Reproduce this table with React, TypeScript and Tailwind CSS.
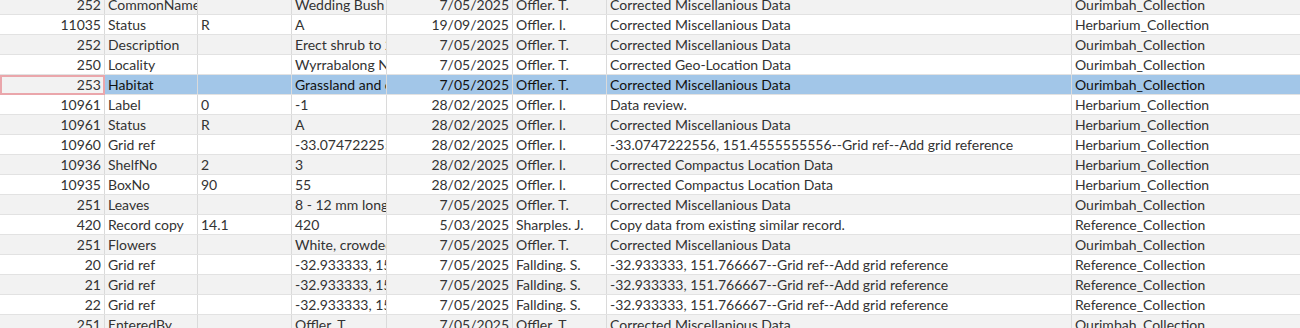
const rows = [
  { id: "252", field: "CommonName", oldVal: "", newVal: "Wedding Bush", date: "7/05/2025", user: "Offler. T.", comment: "Corrected Miscellanious Data", coll: "Ourimbah_Collection" },
  { id: "11035", field: "Status", oldVal: "R", newVal: "A", date: "19/09/2025", user: "Offler. I.", comment: "Corrected Miscellanious Data", coll: "Herbarium_Collection" },
  { id: "252", field: "Description", oldVal: "", newVal: "Erect shrub to 2 m high", date: "7/05/2025", user: "Offler. T.", comment: "Corrected Miscellanious Data", coll: "Ourimbah_Collection" },
  { id: "250", field: "Locality", oldVal: "", newVal: "Wyrrabalong National Park", date: "7/05/2025", user: "Offler. T.", comment: "Corrected Geo-Location Data", coll: "Ourimbah_Collection" },
  { id: "253", field: "Habitat", oldVal: "", newVal: "Grassland and open forest", date: "7/05/2025", user: "Offler. T.", comment: "Corrected Miscellanious Data", coll: "Ourimbah_Collection", selected: true },
  { id: "10961", field: "Label", oldVal: "0", newVal: "-1", date: "28/02/2025", user: "Offler. I.", comment: "Data review.", coll: "Herbarium_Collection" },
  { id: "10961", field: "Status", oldVal: "R", newVal: "A", date: "28/02/2025", user: "Offler. I.", comment: "Corrected Miscellanious Data", coll: "Herbarium_Collection" },
  { id: "10960", field: "Grid ref", oldVal: "", newVal: "-33.0747222556, 151.4555555556", date: "28/02/2025", user: "Offler. I.", comment: "-33.0747222556, 151.4555555556--Grid ref--Add grid reference", coll: "Herbarium_Collection" },
  { id: "10936", field: "ShelfNo", oldVal: "2", newVal: "3", date: "28/02/2025", user: "Offler. I.", comment: "Corrected Compactus Location Data", coll: "Herbarium_Collection" },
  { id: "10935", field: "BoxNo", oldVal: "90", newVal: "55", date: "28/02/2025", user: "Offler. I.", comment: "Corrected Compactus Location Data", coll: "Herbarium_Collection" },
  { id: "251", field: "Leaves", oldVal: "", newVal: "8 - 12 mm long, narrow", date: "7/05/2025", user: "Offler. T.", comment: "Corrected Miscellanious Data", coll: "Ourimbah_Collection" },
  { id: "420", field: "Record copy", oldVal: "14.1", newVal: "420", date: "5/03/2025", user: "Sharples. J.", comment: "Copy data from existing similar record.", coll: "Reference_Collection" },
  { id: "251", field: "Flowers", oldVal: "", newVal: "White, crowded at ends", date: "7/05/2025", user: "Offler. T.", comment: "Corrected Miscellanious Data", coll: "Ourimbah_Collection" },
  { id: "20", field: "Grid ref", oldVal: "", newVal: "-32.933333, 151.766667", date: "7/05/2025", user: "Fallding. S.", comment: "-32.933333, 151.766667--Grid ref--Add grid reference", coll: "Reference_Collection" },
  { id: "21", field: "Grid ref", oldVal: "", newVal: "-32.933333, 151.766667", date: "7/05/2025", user: "Fallding. S.", comment: "-32.933333, 151.766667--Grid ref--Add grid reference", coll: "Reference_Collection" },
  { id: "22", field: "Grid ref", oldVal: "", newVal: "-32.933333, 151.766667", date: "7/05/2025", user: "Fallding. S.", comment: "-32.933333, 151.766667--Grid ref--Add grid reference", coll: "Reference_Collection" },
  { id: "251", field: "EnteredBy", oldVal: "", newVal: "Offler. T.", date: "7/05/2025", user: "Offler. T.", comment: "Corrected Miscellanious Data", coll: "Ourimbah_Collection" },
]

const cell = "h-full overflow-hidden whitespace-nowrap border-r border-[#dadada] px-[3px] leading-[19px]"

export default function App() {
  return (
    <div
      className="h-[328px] w-[1300px] overflow-hidden bg-white text-[14px] text-[#333333]"
      style={{ fontFamily: "Lato, 'Open Sans', sans-serif" }}
    >
      <div className="-mt-[5px]">
        {rows.map((r, i) => {
          const bg = r.selected ? "bg-[#a2c6e8] text-[#111]" : i % 2 === 0 ? "bg-[#f2f2f2]" : "bg-white"
          return (
            <div key={i} className={`flex h-[20px] border-b border-[#e2e2e2] ${bg}`}>
              {r.selected ? (
                <div className="h-[20px] w-[105px] -mb-px shrink-0 overflow-hidden border-2 border-[#eaa6ab] bg-[#f2f2f2] pr-[2px] text-right leading-[16px] text-[#333]">
                  {r.id}
                </div>
              ) : (
                <div className={`${cell} w-[105px] shrink-0 text-right`}>{r.id}</div>
              )}
              <div className={`${cell} w-[93px] shrink-0`}>{r.field}</div>
              <div className={`${cell} w-[94px] shrink-0`}>{r.oldVal}</div>
              <div className={`${cell} w-[95px] shrink-0 text-clip`}>{r.newVal}</div>
              <div className={`${cell} w-[126px] shrink-0 text-right`}>{r.date}</div>
              <div className={`${cell} w-[94px] shrink-0`}>{r.user}</div>
              <div className={`${cell} w-[465px] shrink-0`}>{r.comment}</div>
              <div className={`${cell} flex-1 border-r-0`}>{r.coll}</div>
            </div>
          )
        })}
      </div>
    </div>
  )
}
